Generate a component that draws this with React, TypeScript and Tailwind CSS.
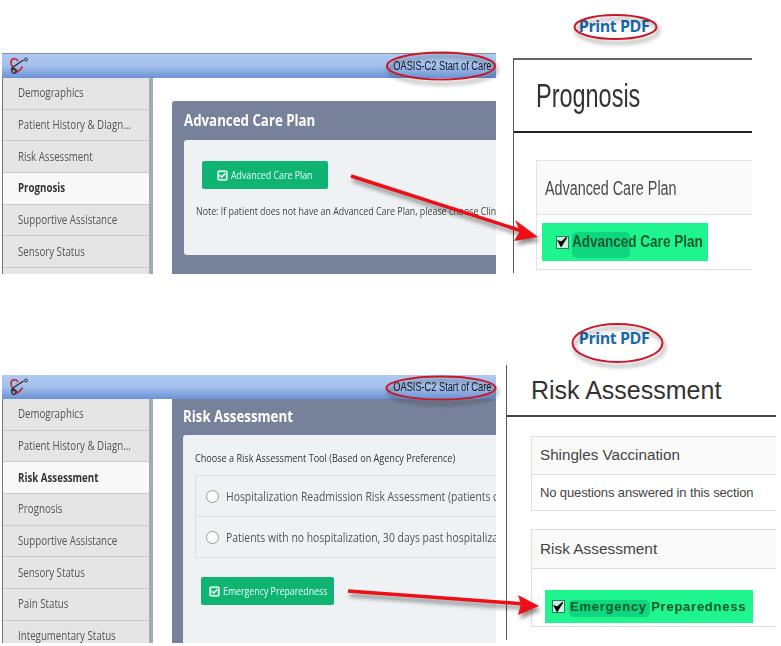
import { FaRegCheckSquare } from "react-icons/fa";

const sans = "font-['Open_Sans',sans-serif]";
const arial = "font-['Liberation_Sans',sans-serif]";

type NavProps = {
  items: string[];
  active: string;
};

function AppLogo() {
  return (
    <svg width="20" height="18" viewBox="0 0 20 18" fill="none" className="shrink-0">
      <path d="M9 4C7 .5 1.500 1 2 6c.3 2.500 2 5 4.500 8.500 2.500.5 5-1.500 7-5" stroke="#c4323c" strokeWidth="1.800" />
      <path d="M2.500 13c0-2 1.500-3 3-4l9-6" stroke="#2b2b3a" strokeWidth="1.500" />
      <circle cx="5" cy="14" r="2.300" stroke="#2b2b3a" strokeWidth="1.300" />
      <circle cx="17" cy="2.500" r="1.500" stroke="#2b2b3a" strokeWidth="1" />
    </svg>
  );
}

function TitleBar() {
  return (
    <div className="flex h-[24px] shrink-0 items-center justify-between bg-gradient-to-b from-[#aecaf2] via-[#a3bfec] to-[#6c92d3] pl-[7px] pr-[5px]">
      <AppLogo />
      <span className={`${arial} origin-right scale-x-[0.77] whitespace-nowrap text-[12px] text-[#151515]`}>
        OASIS-C2 Start of Care
      </span>
    </div>
  );
}

function SideNav({ items, active }: NavProps) {
  return (
    <div className="flex w-[151px] shrink-0 flex-col overflow-hidden border-r-[4px] border-l border-[#a5aab8] border-l-[#777]">
      {items.map((item) => (
        <div
          key={item}
          className={`${sans} flex h-[31.7px] shrink-0 items-center border-b border-[#c9c9c9] pl-[15px] text-[12px] ${
            item === active ? "bg-[#f8f8f8] font-bold text-[#333]" : "bg-[#e5e5e5] text-[#555]"
          }`}
        >
          <span className="origin-left scale-x-[0.81] whitespace-nowrap">{item}</span>
        </div>
      ))}
    </div>
  );
}

function GreenButton({ label, className }: { label: string; className: string }) {
  return (
    <div className={`${sans} ${className} flex h-[28px] items-center gap-[3px] rounded-[2px] bg-[#0fb372] text-[11px] text-[#e9fff5]`}>
      <FaRegCheckSquare size={11} stroke="currentColor" strokeWidth={30} className="shrink-0" />
      <span className="origin-left scale-x-[0.8] whitespace-nowrap">{label}</span>
    </div>
  );
}

function PrintPdf() {
  return <div className={`${sans} text-[16px] font-bold leading-[20px] tracking-[-0.45px] text-[#1a68ad]`}>Print PDF</div>;
}

function PanelTitle({ label, className }: { label: string; className: string }) {
  return (
    <div className={`${sans} ${className} origin-left scale-x-[0.83] whitespace-nowrap text-[16px] font-bold leading-[24px] text-white`}>
      {label}
    </div>
  );
}

function Highlight({
  label,
  className,
  markClass,
  textClass,
}: {
  label: string;
  className: string;
  markClass: string;
  textClass: string;
}) {
  return (
    <div className={`relative flex items-center bg-[#1ff58e] ${className}`}>
      <div className={`absolute rounded-[5px] bg-[#0fd680] ${markClass}`} />
      <span className="relative flex h-[13px] w-[13px] shrink-0 items-center justify-center border border-[#2a7f5a] bg-[#c9f2de]">
        <svg width="12" height="12" viewBox="0 0 12 12">
          <path d="M1.500 5l3 5.500L10.500 1 5 6z" fill="#050505" stroke="#050505" strokeWidth="1.400" />
        </svg>
      </span>
      <span className={`relative whitespace-nowrap ${arial} ${textClass}`}>{label}</span>
    </div>
  );
}

function Annotations() {
  return (
    <svg width="781" height="646" viewBox="0 0 781 646" fill="none" className="pointer-events-none absolute left-0 top-0">
      <g className="drop-shadow-[2px_4px_2px_rgba(0,0,0,0.45)]">
        <ellipse cx="441" cy="66" rx="54" ry="13.500" stroke="#c8182a" strokeWidth="2" />
        <ellipse cx="615.500" cy="27" rx="41" ry="12" stroke="#c8182a" strokeWidth="2" />
        <ellipse cx="441" cy="388" rx="54.500" ry="11.500" stroke="#c8182a" strokeWidth="2" />
        <ellipse cx="617.500" cy="343" rx="45" ry="19" stroke="#c8182a" strokeWidth="2" />
        <path d="M351 176L525 232" stroke="#ee0f16" strokeWidth="3.500" />
        <path d="M538 237L515 220L520 231L514 241Z" fill="#ee0f16" />
        <path d="M348 591L525 604" stroke="#ee0f16" strokeWidth="3.500" />
        <path d="M539 606L518 595L521 604L518 615Z" fill="#ee0f16" />
      </g>
    </svg>
  );
}

export default function App() {
  const navTop = ["Demographics", "Patient History & Diagn...", "Risk Assessment", "Prognosis", "Supportive Assistance", "Sensory Status", ""];
  const navBottom = ["Demographics", "Patient History & Diagn...", "Risk Assessment", "Prognosis", "Supportive Assistance", "Sensory Status", "Pain Status", "Integumentary Status"];
  const tools = ["Hospitalization Readmission Risk Assessment (patients c", "Patients with no hospitalization, 30 days past hospitaliza"];

  return (
    <div className="relative h-[646px] w-[781px] overflow-hidden bg-white">
      {/* first pair */}
      <div className="flex h-[322px] pl-[2px]">
        <div className="mt-[53px] flex h-[221px] w-[494px] flex-col overflow-hidden border-t border-[#8a8f9c]">
          <TitleBar />
          <div className="flex min-h-0 flex-1">
            <SideNav items={navTop} active="Prognosis" />
            <div className="min-w-0 flex-1 overflow-hidden pl-[19px] pt-[23px]">
              <div className="h-[180px] rounded-tl-[3px] bg-[#78819a] pl-[12px] pt-[7px]">
                <PanelTitle label="Advanced Care Plan" className="h-[32px]" />
                <div className="h-[115px] rounded-l-[3px] bg-[#eef2f4] pl-[18px] pt-[21px]">
                  <GreenButton label="Advanced Care Plan" className="w-[126px] pl-[15px]" />
                  <div className={`${sans} -ml-[6px] mt-[14px] origin-left scale-x-[0.805] whitespace-nowrap text-[11px] text-[#444]`}>
                    Note: If patient does not have an Advanced Care Plan, please choose Clin
                  </div>
                </div>
              </div>
            </div>
          </div>
        </div>

        <div className="ml-[17px] flex flex-col">
          <div className="flex h-[58px] justify-center pr-[37px] pt-[16px]">
            <PrintPdf />
          </div>
          <div className="flex h-[215px] w-[239px] flex-col overflow-hidden border-l border-t-2 border-l-[#555] border-t-[#666]">
            <div className="flex h-[73px] shrink-0 items-center border-b-[2px] border-[#222] pl-[22px]">
              <span className={`${arial} origin-left scale-x-[0.69] text-[34px] text-[#333]`}>Prognosis</span>
            </div>
            <div className="ml-[22px] mt-[27px] h-[110px] border-y border-l border-[#e2e2e2]">
              <div className="flex h-[54px] items-center border-b border-[#e0e0e0] bg-[#fafafa] pl-[8px]">
                <span className={`${arial} origin-left scale-x-[0.717] whitespace-nowrap text-[20px] text-[#4a4a4a]`}>Advanced Care Plan</span>
              </div>
              <Highlight
                label="Advanced Care Plan"
                className="ml-[5px] mt-[8px] h-[38px] w-[166px] pl-[14px]"
                markClass="left-[30px] top-[9px] h-[26px] w-[58px]"
                textClass="ml-[3px] origin-left scale-x-[0.795] text-[17px] font-bold text-[#0a5a2c]"
              />
            </div>
          </div>
        </div>
      </div>

      {/* second pair */}
      <div className="flex h-[324px] pl-[2px]">
        <div className="mt-[53px] flex h-[268px] w-[494px] flex-col overflow-hidden">
          <TitleBar />
          <div className="flex min-h-0 flex-1">
            <SideNav items={navBottom} active="Risk Assessment" />
            <div className="min-w-0 flex-1 overflow-hidden pl-[19px]">
              <div className="h-full bg-[#78819a] pl-[11px] pt-[5px]">
                <PanelTitle label="Risk Assessment" className="h-[31px]" />
                <div className="h-full rounded-tl-[3px] bg-[#eef2f4] pl-[12px] pt-[14px]">
                  <div className={`${sans} origin-left scale-x-[0.79] whitespace-nowrap text-[11.5px] text-[#333]`}>
                    Choose a Risk Assessment Tool (Based on Agency Preference)
                  </div>
                  <div className="mt-[9px] h-[83px] rounded-l-[2px] border-y border-l border-[#d9dfd9]">
                    {tools.map((text, i) => (
                      <div key={text} className={`flex h-[40.5px] items-center pl-[10px] ${i === 0 ? "border-b border-[#d9dfd9]" : ""}`}>
                        <span className="h-[13px] w-[13px] shrink-0 rounded-full border border-[#999] bg-white" />
                        <span className={`${sans} ml-[7px] origin-left scale-x-[0.77] whitespace-nowrap text-[13.5px] text-[#555]`}>{text}</span>
                      </div>
                    ))}
                  </div>
                  <div className="ml-[6px] mt-[19px]">
                    <GreenButton label="Emergency Preparedness" className="w-[133px] pl-[8px]" />
                  </div>
                </div>
              </div>
            </div>
          </div>
        </div>

        <div className="ml-[10px] flex flex-col">
          <div className="flex h-[43px] justify-center pr-[54px] pt-[6px]">
            <PrintPdf />
          </div>
          <div className="h-[275px] w-[270px] overflow-hidden border-l border-l-[#555]">
            <div className="flex h-[52px] items-center border-b-[2px] border-[#444] pl-[24px] pt-[2px]">
              <span className={`${arial} text-[25px] text-[#333]`}>Risk Assessment</span>
            </div>
            <div className="ml-[24px] mt-[19px] h-[75px] border-y border-l border-[#dedede]">
              <div className="flex h-[38px] items-center border-b border-[#dedede] bg-[#fafafa] pl-[8px]">
                <span className={`${arial} text-[15.200px] text-[#444]`}>Shingles Vaccination</span>
              </div>
              <div className={`${arial} pl-[8px] pt-[8px] text-[13px] tracking-[-0.13px] text-[#444]`}>No questions answered in this section</div>
            </div>
            <div className="ml-[24px] mt-[18px] h-[98px] border-y border-l border-[#dedede]">
              <div className="flex h-[39px] items-center border-b border-[#dedede] bg-[#fafafa] pl-[8px]">
                <span className={`${arial} text-[15.400px] text-[#444]`}>Risk Assessment</span>
              </div>
              <Highlight
                label="Emergency Preparedness"
                className="ml-[13px] mt-[21px] h-[33px] w-[208px] pl-[7px]"
                markClass="left-[24px] top-[10px] h-[17px] w-[81px]"
                textClass="ml-[5px] text-[13px] font-bold tracking-[0.75px] text-[#0a5a2c]"
              />
            </div>
          </div>
        </div>
      </div>

      <Annotations />
    </div>
  );
}
